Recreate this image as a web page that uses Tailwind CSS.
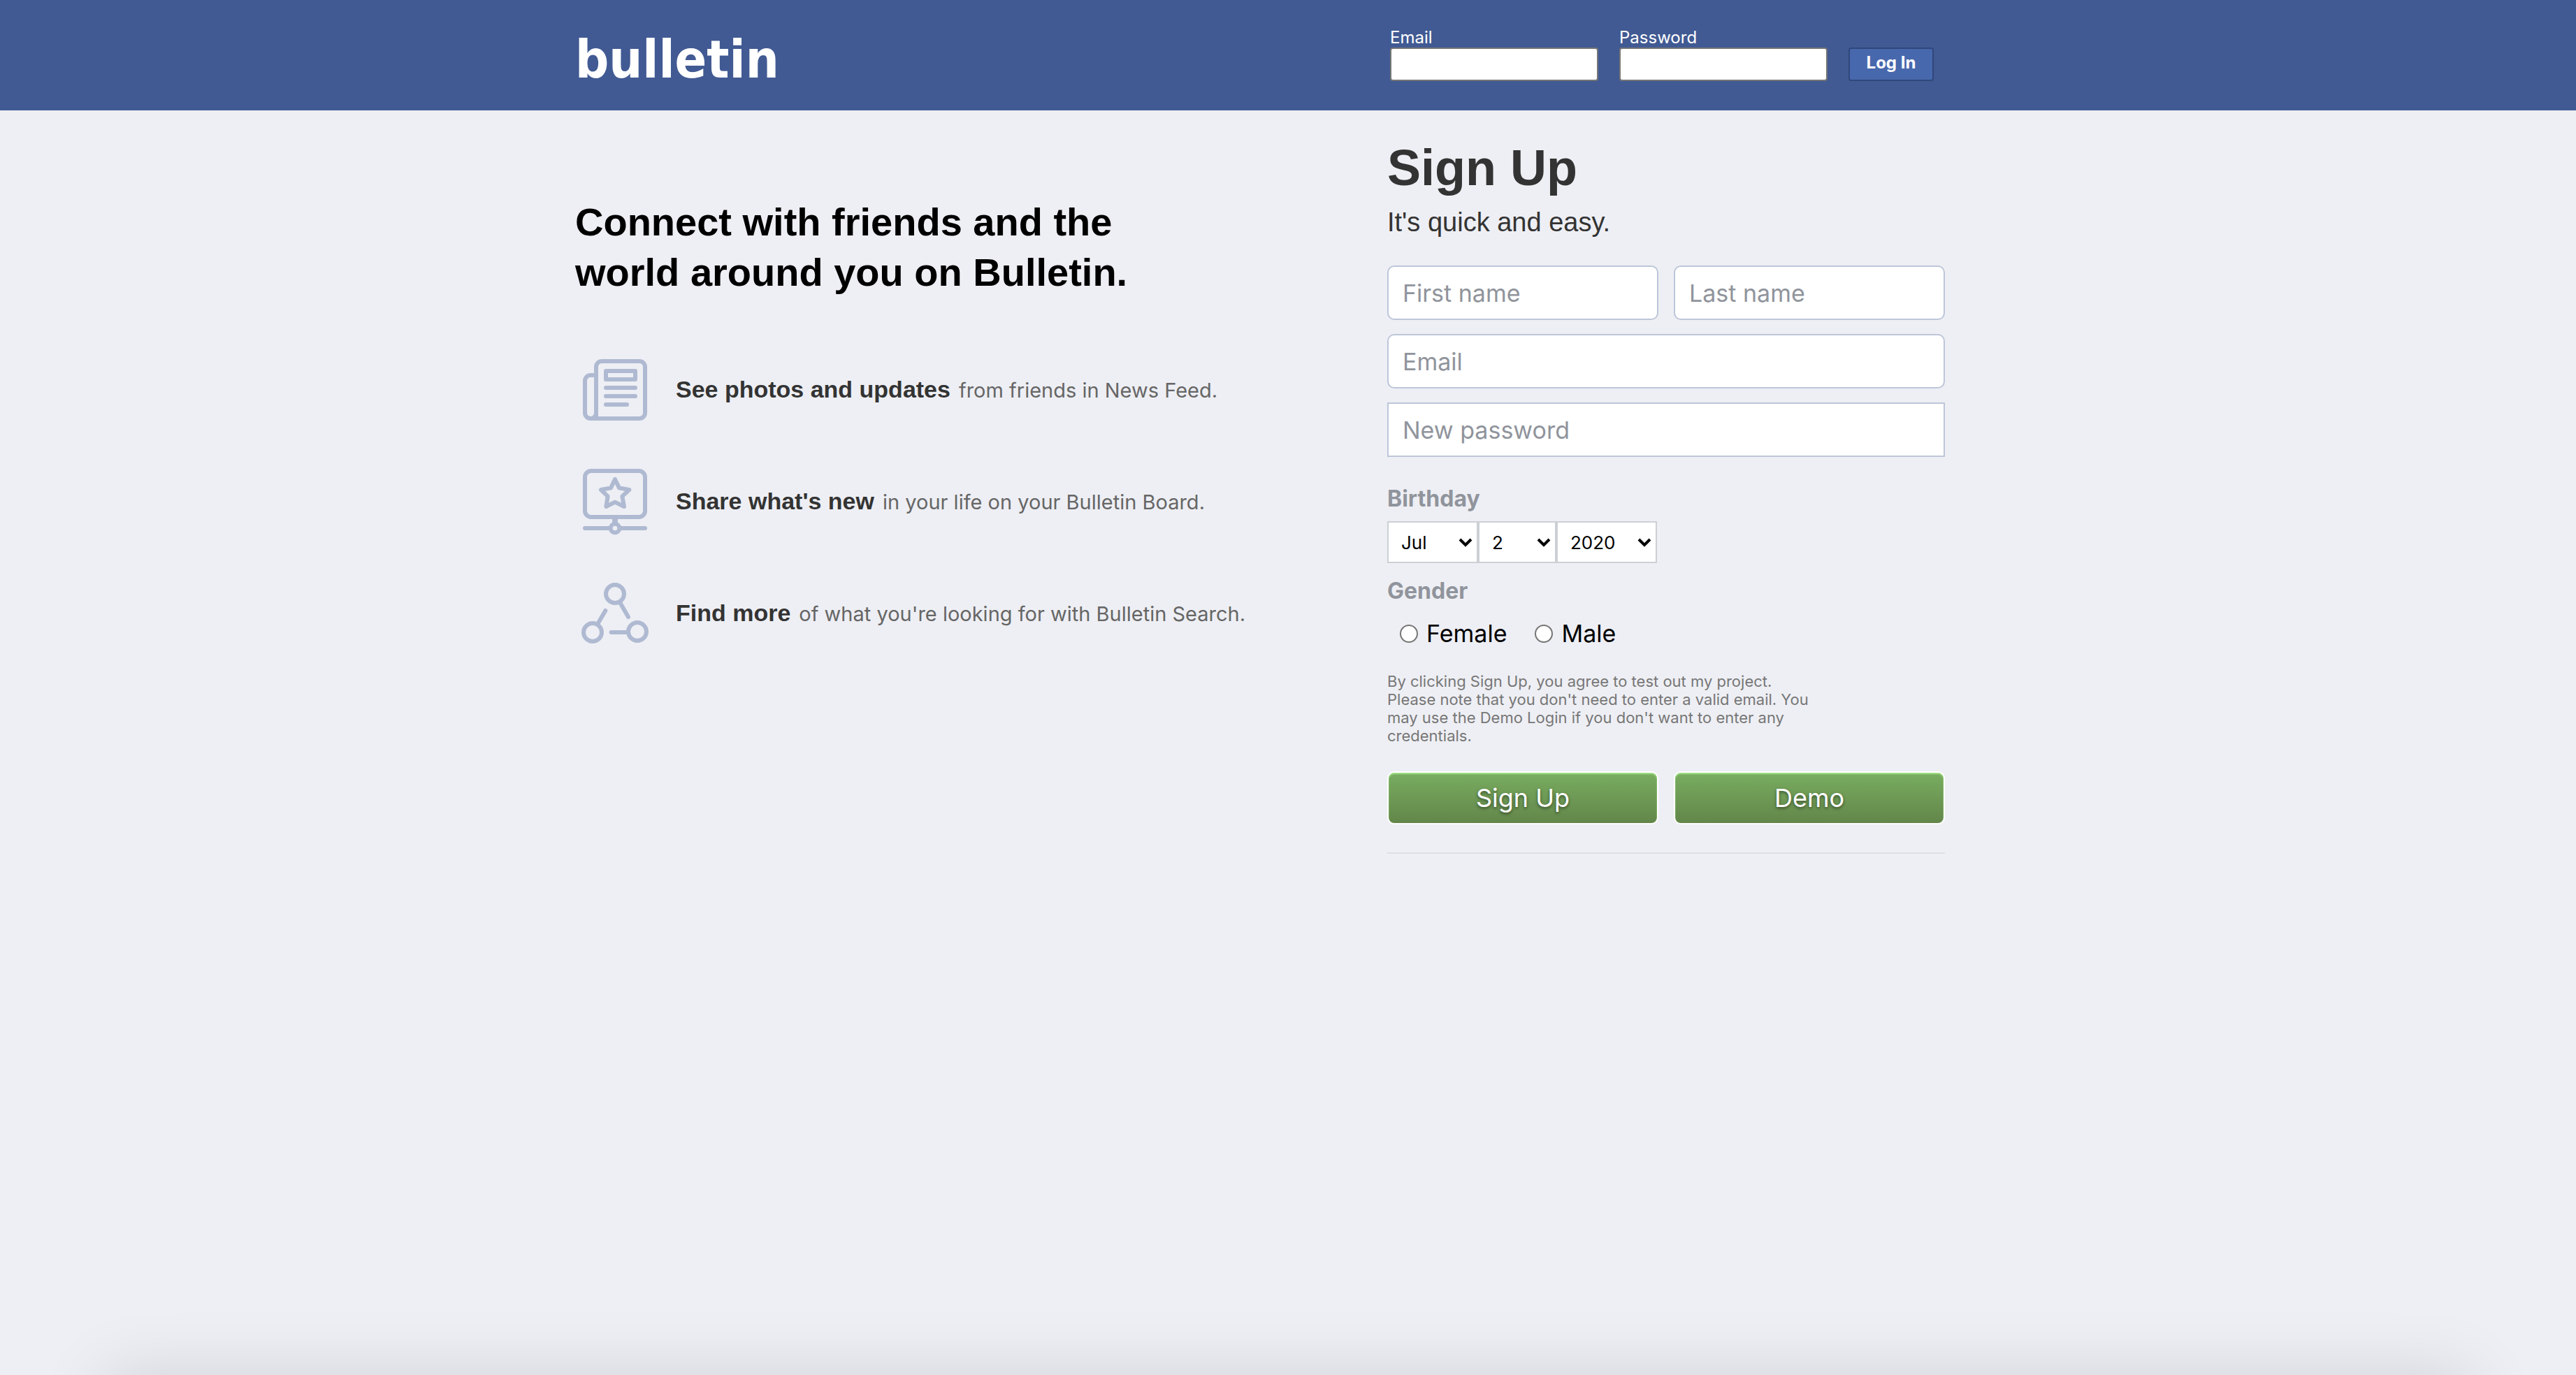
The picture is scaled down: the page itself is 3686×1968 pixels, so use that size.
<!DOCTYPE html>
<html lang="en">
<head>
<meta charset="utf-8">
<meta name="viewport" content="width=device-width, initial-scale=1">
<title>Bulletin</title>
<script src="https://cdn.jsdelivr.net/npm/@tailwindcss/browser@4"></script>
</head>
<body class="flex min-h-screen flex-col bg-[#eeeff4] font-[Inter,sans-serif] text-black">
  <header class="bg-[#415a93] text-white">
    <div class="mx-auto flex h-[158px] w-full max-w-[2040px] justify-between pr-20">
      <a href="#" class="pt-6 font-['DejaVu_Sans_Condensed','DejaVu_Sans',sans-serif] text-[75px] leading-[122px] font-bold">bulletin</a>
      <form class="flex w-[798px] items-end gap-[30px] pb-[42px] pl-1">
        <div class="flex w-[298px] flex-col">
          <label for="login-email" class="text-[24px] leading-[28px]">Email</label>
          <input id="login-email" type="text" class="h-12 w-full rounded-[4px] border-2 border-[#767676] bg-white px-2 text-[24px] text-black">
        </div>
        <div class="flex w-[298px] flex-col">
          <label for="login-password" class="text-[24px] leading-[28px]">Password</label>
          <input id="login-password" type="password" class="h-12 w-full rounded-[4px] border-2 border-[#767676] bg-white px-2 text-[24px] text-black">
        </div>
        <button type="button" class="h-12 w-[122px] rounded-[4px] border-2 border-[#2f477a] bg-[#4868ad] pb-1 text-[24px] leading-[30px] font-bold">Log In</button>
      </form>
    </div>
  </header>

  <main class="mx-auto flex w-full max-w-[2040px] grow justify-between pr-20">
    <section class="pt-[124px]">
      <h2 class="font-['Liberation_Sans',sans-serif] text-[56px] leading-[72px] font-bold">Connect with friends and the<br>world around you on Bulletin.</h2>
      <ul class="mt-[82px] flex flex-col gap-[60px] pl-[7px]">
        <li class="flex h-[100px] items-center gap-[37px]">
          <svg class="size-[100px]" viewBox="60 54 300 300" fill="none" stroke="#afbad2" stroke-width="18" stroke-linecap="round" stroke-linejoin="round" aria-hidden="true">
            <path d="M129 327V105a24 24 0 0 1 24-24h162a24 24 0 0 1 24 24v198a24 24 0 0 1-24 24H105a24 24 0 0 1-24-24V165a24 24 0 0 1 24-24h24"/>
            <path d="M129 303a24 24 0 0 1-24 24"/>
            <path d="M171 123h126v36H171zM171 195h126M171 231h126M171 267h90"/>
          </svg>
          <p class="flex items-baseline gap-3 text-[29px] leading-[40px] text-[#666]"><strong class="font-['Liberation_Sans',sans-serif] text-[34px] text-[#333]">See photos and updates</strong>from friends in News Feed.</p>
        </li>
        <li class="flex h-[100px] items-center gap-[37px]">
          <svg class="size-[100px]" viewBox="60 534 300 300" fill="none" stroke="#afbad2" stroke-width="18" stroke-linecap="round" stroke-linejoin="round" aria-hidden="true">
            <rect x="81" y="552" width="258" height="198" rx="26"/>
            <path d="M210 588l18 37 43 8-30 28 8 44-39-19-38 19 7-44-29-28 42-8z"/>
            <path d="M210 754v22" stroke-width="24" stroke-linecap="butt"/>
            <circle cx="210" cy="798" r="19"/>
            <path d="M81 798h108M231 798h108"/>
          </svg>
          <p class="flex items-baseline gap-3 text-[29px] leading-[40px] text-[#666]"><strong class="font-['Liberation_Sans',sans-serif] text-[34px] text-[#333]">Share what's new</strong>in your life on your Bulletin Board.</p>
        </li>
        <li class="flex h-[100px] items-center gap-[37px]">
          <svg class="size-[100px]" viewBox="60 1014 300 300" fill="none" stroke="#afbad2" stroke-width="18" stroke-linecap="round" aria-hidden="true">
            <circle cx="210" cy="1080" r="39"/>
            <circle cx="114" cy="1245" r="39"/>
            <circle cx="306" cy="1242" r="39"/>
            <path d="M232 1118l35 61M169 1152l-33 56M194 1245h72"/>
          </svg>
          <p class="flex items-baseline gap-3 text-[29px] leading-[40px] text-[#666]"><strong class="font-['Liberation_Sans',sans-serif] text-[34px] text-[#333]">Find more</strong>of what you're looking for with Bulletin Search.</p>
        </li>
      </ul>
    </section>

    <form class="w-[798px] pt-[40px]">
      <h1 class="font-['Liberation_Sans',sans-serif] text-[72px] leading-[84px] font-bold text-[#333]">Sign Up</h1>
      <p class="pt-[14px] font-['Liberation_Sans',sans-serif] text-[38px] leading-[44px] text-[#333]">It's quick and easy.</p>
      <div class="mt-[40px] grid grid-cols-2 gap-x-[22px] gap-y-5">
        <input type="text" aria-label="First name" placeholder="First name" class="h-[78px] w-full min-w-0 rounded-[10px] border-2 border-[#bdc6d9] bg-white px-[20px] text-[34px] placeholder:text-[#90949c]">
        <input type="text" aria-label="Last name" placeholder="Last name" class="h-[78px] w-full min-w-0 rounded-[10px] border-2 border-[#bdc6d9] bg-white px-[20px] text-[34px] placeholder:text-[#90949c]">
        <input type="email" aria-label="Email" placeholder="Email" class="col-span-2 h-[78px] w-full rounded-[10px] border-2 border-[#bdc6d9] bg-white px-[20px] text-[34px] placeholder:text-[#90949c]">
        <input type="password" aria-label="New password" placeholder="New password" class="col-span-2 h-[78px] w-full border-2 border-[#bdc6d9] bg-white px-[20px] text-[34px] placeholder:text-[#90949c]">
      </div>
      <fieldset>
        <legend class="pt-[40px] text-[32px] leading-[40px] font-bold text-[#90949c]">Birthday</legend>
        <div class="mt-[12px] flex">
          <div class="relative">
            <select aria-label="Month" class="h-[60px] w-[130px] appearance-none border-2 border-[#ccd0d5] bg-white pl-[18px] text-[26px]"><option>Jul</option></select>
            <svg class="pointer-events-none absolute top-[24px] right-[8px] h-[14px] w-[20px]" viewBox="0 0 20 14" fill="none" stroke="#000" stroke-width="4" aria-hidden="true"><path d="M2 2l8 8 8-8"/></svg>
          </div>
          <div class="relative">
            <select aria-label="Day" class="h-[60px] w-[112px] appearance-none border-2 border-[#ccd0d5] bg-white pl-[18px] text-[26px]"><option>2</option></select>
            <svg class="pointer-events-none absolute top-[24px] right-[8px] h-[14px] w-[20px]" viewBox="0 0 20 14" fill="none" stroke="#000" stroke-width="4" aria-hidden="true"><path d="M2 2l8 8 8-8"/></svg>
          </div>
          <div class="relative">
            <select aria-label="Year" class="h-[60px] w-[144px] appearance-none border-2 border-[#ccd0d5] bg-white pl-[18px] text-[26px]"><option>2020</option></select>
            <svg class="pointer-events-none absolute top-[24px] right-[8px] h-[14px] w-[20px]" viewBox="0 0 20 14" fill="none" stroke="#000" stroke-width="4" aria-hidden="true"><path d="M2 2l8 8 8-8"/></svg>
          </div>
        </div>
      </fieldset>
      <fieldset>
        <legend class="pt-[20px] text-[32px] leading-[40px] font-bold text-[#90949c]">Gender</legend>
        <div class="mt-[20px] flex gap-10 pl-[18px] text-[34px] leading-[42px]">
          <label class="flex items-center gap-3"><input type="radio" name="gender" class="size-[26px] appearance-none rounded-full border-2 border-[#767676] bg-white checked:border-8">Female</label>
          <label class="flex items-center gap-3"><input type="radio" name="gender" class="size-[26px] appearance-none rounded-full border-2 border-[#767676] bg-white checked:border-8">Male</label>
        </div>
      </fieldset>
      <p class="mt-[34px] w-[614px] text-[22px] leading-[26px] text-[#777]">By clicking Sign Up, you agree to test out my project. Please note that you don't need to enter a valid email. You may use the Demo Login if you don't want to enter any credentials.</p>
      <div class="mt-[38px] grid grid-cols-2 gap-[22px] border-b-2 border-[#dddfe3] pb-10">
        <button type="button" class="h-[76px] rounded-[10px] border-2 border-white bg-linear-to-b from-[#79ae61] to-[#628549] bg-origin-border text-[36px] leading-[44px] text-white shadow-[inset_0_2px_2px_#a4e388] text-shadow-[0_2px_4px_rgb(0_0_0/0.5)]">Sign Up</button>
        <button type="button" class="h-[76px] rounded-[10px] border-2 border-white bg-linear-to-b from-[#79ae61] to-[#628549] bg-origin-border text-[36px] leading-[44px] text-white shadow-[inset_0_2px_2px_#a4e388] text-shadow-[0_2px_4px_rgb(0_0_0/0.5)]">Demo</button>
      </div>
    </form>
  </main>

  <div class="h-[140px] overflow-hidden pt-[140px]" aria-hidden="true">
    <div class="mx-[150px] h-[140px] shadow-[0_0_100px_rgb(0_0_0/0.12)]"></div>
  </div>
</body>
</html>
